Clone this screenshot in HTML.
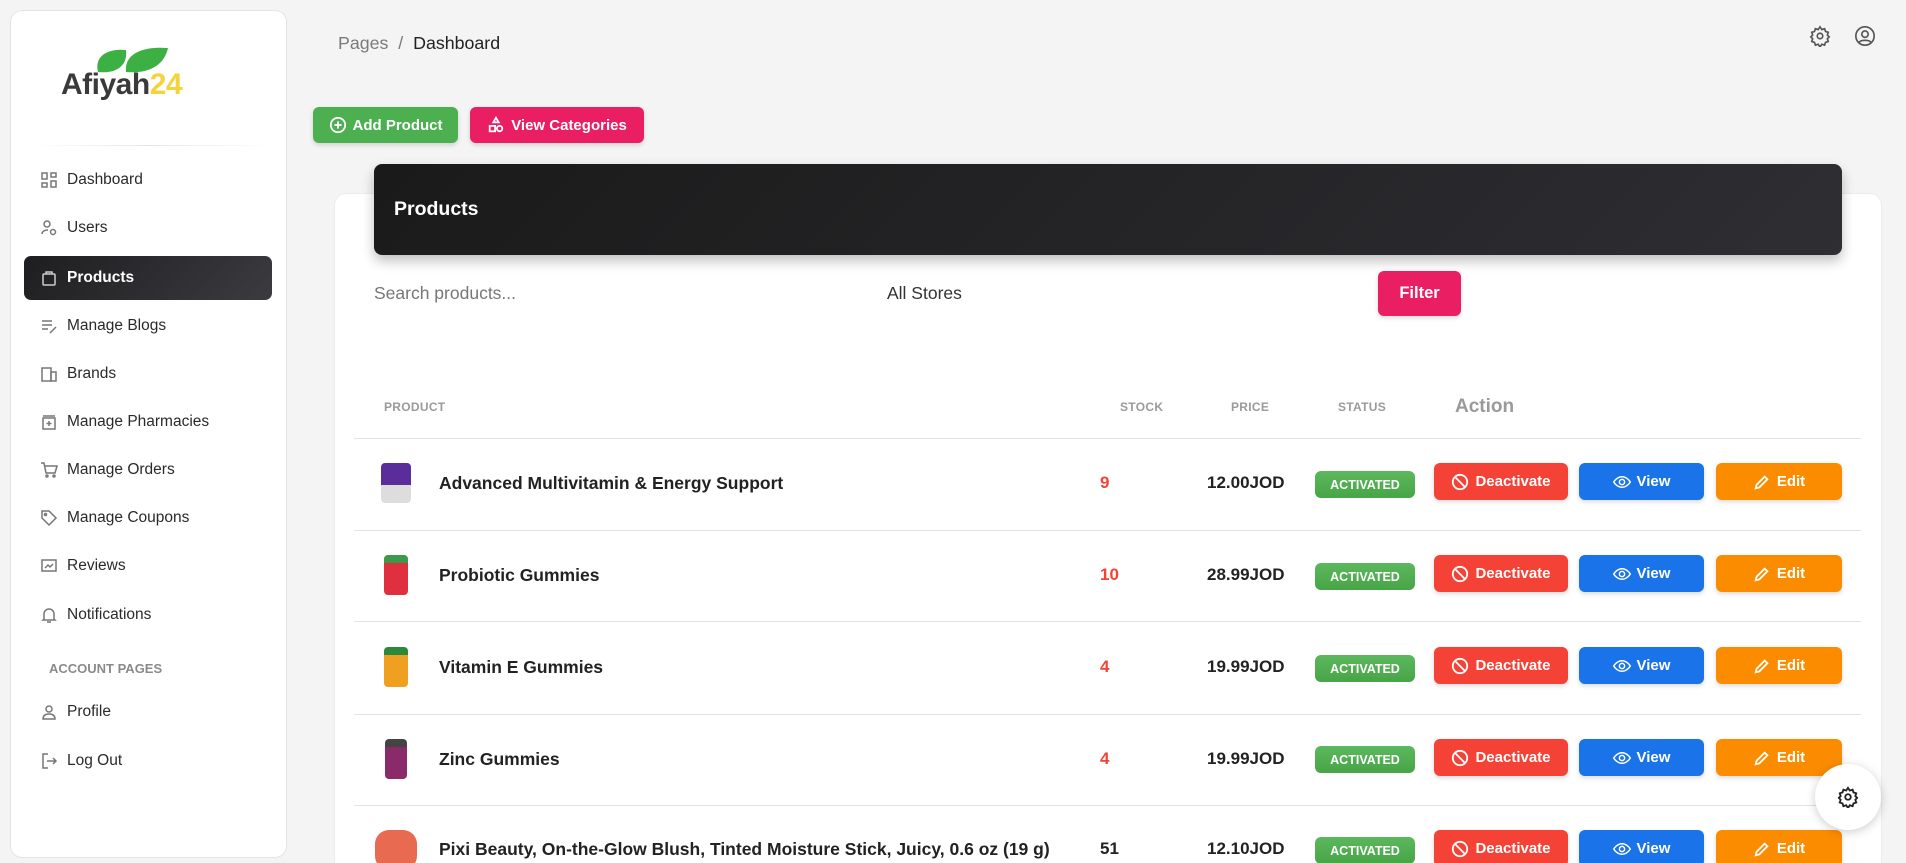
<!DOCTYPE html>
<html style="overflow:hidden;height:863px"><head><meta charset="utf-8"><style>
*{box-sizing:border-box;margin:0;padding:0}
body{width:1906px;height:863px;overflow:hidden;background:#f4f4f4;font-family:"Liberation Sans",sans-serif;color:#222;position:relative}
.abs{position:absolute}
.side{left:10px;top:10px;width:277px;height:848px;background:#fff;border:1px solid #e4e4e4;border-radius:12px}
.nav{position:absolute;left:40px;font-size:15.5px;color:#2a2a2a;display:flex;align-items:center;gap:9px;height:24px}
.nav svg{width:18px;height:18px;stroke:#777;fill:none;stroke-width:1.5}
.active{left:24px;top:256px;width:248px;height:44px;border-radius:7px;background:linear-gradient(135deg,#1e1e20,#3b3b40);}
.btn{position:absolute;color:#fff;font-weight:bold;display:flex;align-items:center;justify-content:center;gap:6px;border-radius:6px;font-size:15px;box-shadow:0 2px 5px rgba(0,0,0,.15)}
.btn svg{width:18px;height:18px;fill:none;stroke:#fff;stroke-width:2}
.th{position:absolute;top:400px;font-size:12px;font-weight:bold;color:#9a9a9a;letter-spacing:.3px}
.line{position:absolute;left:354px;width:1507px;height:1px;background:#e2e2e2}
.name{position:absolute;left:439px;font-size:17.5px;font-weight:bold;color:#222}
.stock{position:absolute;left:1100px;font-size:17px;font-weight:bold;color:#f44336}
.price{position:absolute;left:1207px;font-size:17px;font-weight:bold;color:#222}
.badge{position:absolute;left:1315px;width:100px;height:27px;border-radius:6px;background:linear-gradient(#5cb85c,#47a447);color:#fff;font-size:12.5px;font-weight:bold;display:flex;align-items:center;justify-content:center}
.img{position:absolute;left:381px;width:30px;height:40px;border-radius:4px}
</style></head><body>
<div class="abs side"></div>
<svg class="abs" style="left:60px;top:46px" width="150" height="56" viewBox="0 0 150 56">
<path d="M38 26 C34 10 48 2 66 4 C68 20 56 28 38 26Z" fill="#3cb043"/>
<path d="M66 26 C64 8 82 0 108 2 C104 20 88 28 66 26Z" fill="#3cb043"/>
<text x="1" y="48" font-family="Liberation Sans" font-weight="bold" font-size="30" fill="#3a3a3a" letter-spacing="-0.5">Afiyah<tspan fill="#f5d33b">24</tspan></text>
</svg>
<div class="abs" style="left:30px;top:145px;width:240px;height:1px;background:linear-gradient(90deg,#fff,#e6e6e6,#fff)"></div>
<div class="abs active"></div>
<div class="nav" style="top:168px"><svg viewBox="0 0 18 18"><rect x="2" y="2" width="5" height="6"/><rect x="11" y="2" width="5" height="4"/><rect x="2" y="12" width="5" height="4"/><rect x="11" y="10" width="5" height="6"/></svg>Dashboard</div>
<div class="nav" style="top:216px"><svg viewBox="0 0 18 18"><circle cx="7" cy="5" r="3"/><path d="M2 15c0-3 3-4 6-4"/><circle cx="13" cy="13" r="2.5"/></svg>Users</div>
<div class="nav" style="top:266px;color:#fff;font-weight:bold"><svg viewBox="0 0 18 18" style="stroke:#ccc"><rect x="3" y="5" width="12" height="11" rx="1"/><path d="M6 5V3h6v2"/></svg>Products</div>
<div class="nav" style="top:314px"><svg viewBox="0 0 18 18"><path d="M2 4h10M2 8h10M2 12h6M10 16l6-6"/></svg>Manage Blogs</div>
<div class="nav" style="top:362px"><svg viewBox="0 0 18 18"><rect x="2" y="3" width="9" height="13"/><rect x="11" y="7" width="5" height="9"/></svg>Brands</div>
<div class="nav" style="top:410px"><svg viewBox="0 0 18 18"><rect x="3" y="5" width="12" height="11"/><path d="M3 3h12M9 8v5M6.5 10.5h5"/></svg>Manage Pharmacies</div>
<div class="nav" style="top:458px"><svg viewBox="0 0 18 18"><path d="M1 2h3l2 10h9l2-7H5"/><circle cx="7" cy="15" r="1"/><circle cx="14" cy="15" r="1"/></svg>Manage Orders</div>
<div class="nav" style="top:506px"><svg viewBox="0 0 18 18"><path d="M2 2h7l7 7-7 7-7-7z"/><circle cx="5.5" cy="5.5" r="1"/></svg>Manage Coupons</div>
<div class="nav" style="top:554px"><svg viewBox="0 0 18 18"><rect x="2" y="3" width="14" height="11"/><path d="M5 11l3-3 2 2 3-3"/></svg>Reviews</div>
<div class="nav" style="top:603px"><svg viewBox="0 0 18 18"><path d="M4 13V8a5 5 0 0110 0v5l1 1H3zM7 16h4"/></svg>Notifications</div>
<div class="abs" style="left:49px;top:661px;font-size:13px;font-weight:bold;color:#8a8a8a">ACCOUNT PAGES</div>
<div class="nav" style="top:700px"><svg viewBox="0 0 18 18"><circle cx="9" cy="6" r="3"/><path d="M3 16c0-4 3-5 6-5s6 1 6 5z"/></svg>Profile</div>
<div class="nav" style="top:749px"><svg viewBox="0 0 18 18"><path d="M8 2H3v14h5M7 9h9M13 6l3 3-3 3"/></svg>Log Out</div>

<div class="abs" style="left:338px;top:33px;font-size:17.8px;color:#7a7a7a">Pages &nbsp;/&nbsp; <span style="color:#222">Dashboard</span></div>
<svg class="abs" style="left:1809px;top:25px" width="22" height="22" viewBox="0 0 24 24" fill="none" stroke="#555" stroke-width="1.8"><circle cx="12" cy="12" r="3"/><path d="M12 2l2 3 3-1 1 3 3 1-1 3 2 2-2 2 1 3-3 1-1 3-3-1-2 3-2-3-3 1-1-3-3-1 1-3-2-2 2-2-1-3 3-1 1-3 3 1z"/></svg>
<svg class="abs" style="left:1854px;top:25px" width="22" height="22" viewBox="0 0 24 24" fill="none" stroke="#555" stroke-width="1.8"><circle cx="12" cy="12" r="10"/><circle cx="12" cy="10" r="3.5"/><path d="M5.5 19c2-3 11-3 13 0"/></svg>

<div class="btn" style="left:313px;top:107px;width:145px;height:36px;background:#4caf50"><svg viewBox="0 0 20 20"><circle cx="10" cy="10" r="8"/><path d="M10 6v8M6 10h8"/></svg>Add Product</div>
<div class="btn" style="left:470px;top:107px;width:174px;height:36px;background:#e91e63"><svg viewBox="0 0 20 20"><path d="M10 2l3 5H7z"/><rect x="3" y="11" width="6" height="6"/><circle cx="14" cy="14" r="3"/></svg>View Categories</div>

<div class="abs" style="left:334px;top:193px;width:1548px;height:680px;background:#fff;border-radius:12px;border:1px solid #ececec"></div>
<div class="abs" style="left:374px;top:164px;width:1468px;height:91px;border-radius:8px;background:linear-gradient(135deg,#1a1a1a,#2e2e33);box-shadow:0 6px 12px rgba(0,0,0,.25)"></div>
<div class="abs" style="left:394px;top:198px;color:#fff;font-size:19.5px;font-weight:bold">Products</div>
<div class="abs" style="left:374px;top:283px;font-size:17.5px;color:#777">Search products...</div>
<div class="abs" style="left:887px;top:283px;font-size:17.5px;color:#333">All Stores</div>
<div class="btn" style="left:1378px;top:271px;width:83px;height:45px;background:#e91e63;font-size:16.5px">Filter</div>

<div class="th" style="left:384px">PRODUCT</div>
<div class="th" style="left:1120px">STOCK</div>
<div class="th" style="left:1231px">PRICE</div>
<div class="th" style="left:1338px">STATUS</div>
<div class="abs" style="left:1455px;top:396px;font-size:19px;font-weight:bold;color:#9a9a9a">Action</div>

<div class="line" style="top:438px"></div>
<div class="line" style="top:530px"></div>
<div class="line" style="top:621px"></div>
<div class="line" style="top:714px"></div>
<div class="line" style="top:805px"></div>

<div class="img" style="top:463px;background:linear-gradient(#5a2d9a 0 55%,#ddd 55%)"></div>
<div class="img" style="top:555px;width:24px;left:384px;background:linear-gradient(#3a9a4a 0 20%,#e03040 20%)"></div>
<div class="img" style="top:647px;width:24px;left:384px;background:linear-gradient(#2a8a3a 0 20%,#f0a020 20%)"></div>
<div class="img" style="top:739px;width:22px;left:385px;background:linear-gradient(#444 0 20%,#8a2a6a 20%)"></div>
<div class="img" style="top:830px;left:375px;width:42px;background:#e86a50;border-radius:14px"></div>

<div class="name" style="top:473px">Advanced Multivitamin &amp; Energy Support</div>
<div class="name" style="top:565px">Probiotic Gummies</div>
<div class="name" style="top:657px">Vitamin E Gummies</div>
<div class="name" style="top:749px">Zinc Gummies</div>
<div class="name" style="top:839px">Pixi Beauty, On-the-Glow Blush, Tinted Moisture Stick, Juicy, 0.6 oz (19 g)</div>

<div class="stock" style="top:473px">9</div>
<div class="stock" style="top:565px">10</div>
<div class="stock" style="top:657px">4</div>
<div class="stock" style="top:749px">4</div>
<div class="stock" style="top:839px;color:#222">51</div>

<div class="price" style="top:473px">12.00JOD</div>
<div class="price" style="top:565px">28.99JOD</div>
<div class="price" style="top:657px">19.99JOD</div>
<div class="price" style="top:749px">19.99JOD</div>
<div class="price" style="top:839px">12.10JOD</div>

<div class="badge" style="top:471px">ACTIVATED</div>
<div class="badge" style="top:563px">ACTIVATED</div>
<div class="badge" style="top:655px">ACTIVATED</div>
<div class="badge" style="top:746px">ACTIVATED</div>
<div class="badge" style="top:837px">ACTIVATED</div>

<div id="acts"></div>
<script>
var tops=[463,555,647,739,830],h='';
var dS='<svg viewBox="0 0 20 20"><circle cx="10" cy="10" r="8"/><path d="M4.5 4.5l11 11"/></svg>';
var vS='<svg viewBox="0 0 24 24"><path d="M1 12s4-7 11-7 11 7 11 7-4 7-11 7S1 12 1 12z"/><circle cx="12" cy="12" r="3.5"/></svg>';
var eS='<svg viewBox="0 0 20 20"><path d="M3 17l1-4 9-9 3 3-9 9z"/></svg>';
tops.forEach(function(t){
h+='<div class="btn" style="left:1434px;top:'+t+'px;width:134px;height:37px;background:#f44336">'+dS+'Deactivate</div>';
h+='<div class="btn" style="left:1579px;top:'+t+'px;width:125px;height:37px;background:#1a73e8">'+vS+'View</div>';
h+='<div class="btn" style="left:1716px;top:'+t+'px;width:126px;height:37px;background:#fb8c00">'+eS+'Edit</div>';
});
document.getElementById('acts').innerHTML=h;
</script>

<div class="abs" style="left:1815px;top:764px;width:66px;height:66px;border-radius:50%;background:#fff;box-shadow:0 2px 10px rgba(0,0,0,.2)"></div>
<svg class="abs" style="left:1837px;top:786px" width="22" height="22" viewBox="0 0 24 24" fill="none" stroke="#222" stroke-width="2"><circle cx="12" cy="12" r="3"/><path d="M12 2l2 3 3-1 1 3 3 1-1 3 2 2-2 2 1 3-3 1-1 3-3-1-2 3-2-3-3 1-1-3-3-1 1-3-2-2 2-2-1-3 3-1 1-3 3 1z"/></svg>
</body></html>
